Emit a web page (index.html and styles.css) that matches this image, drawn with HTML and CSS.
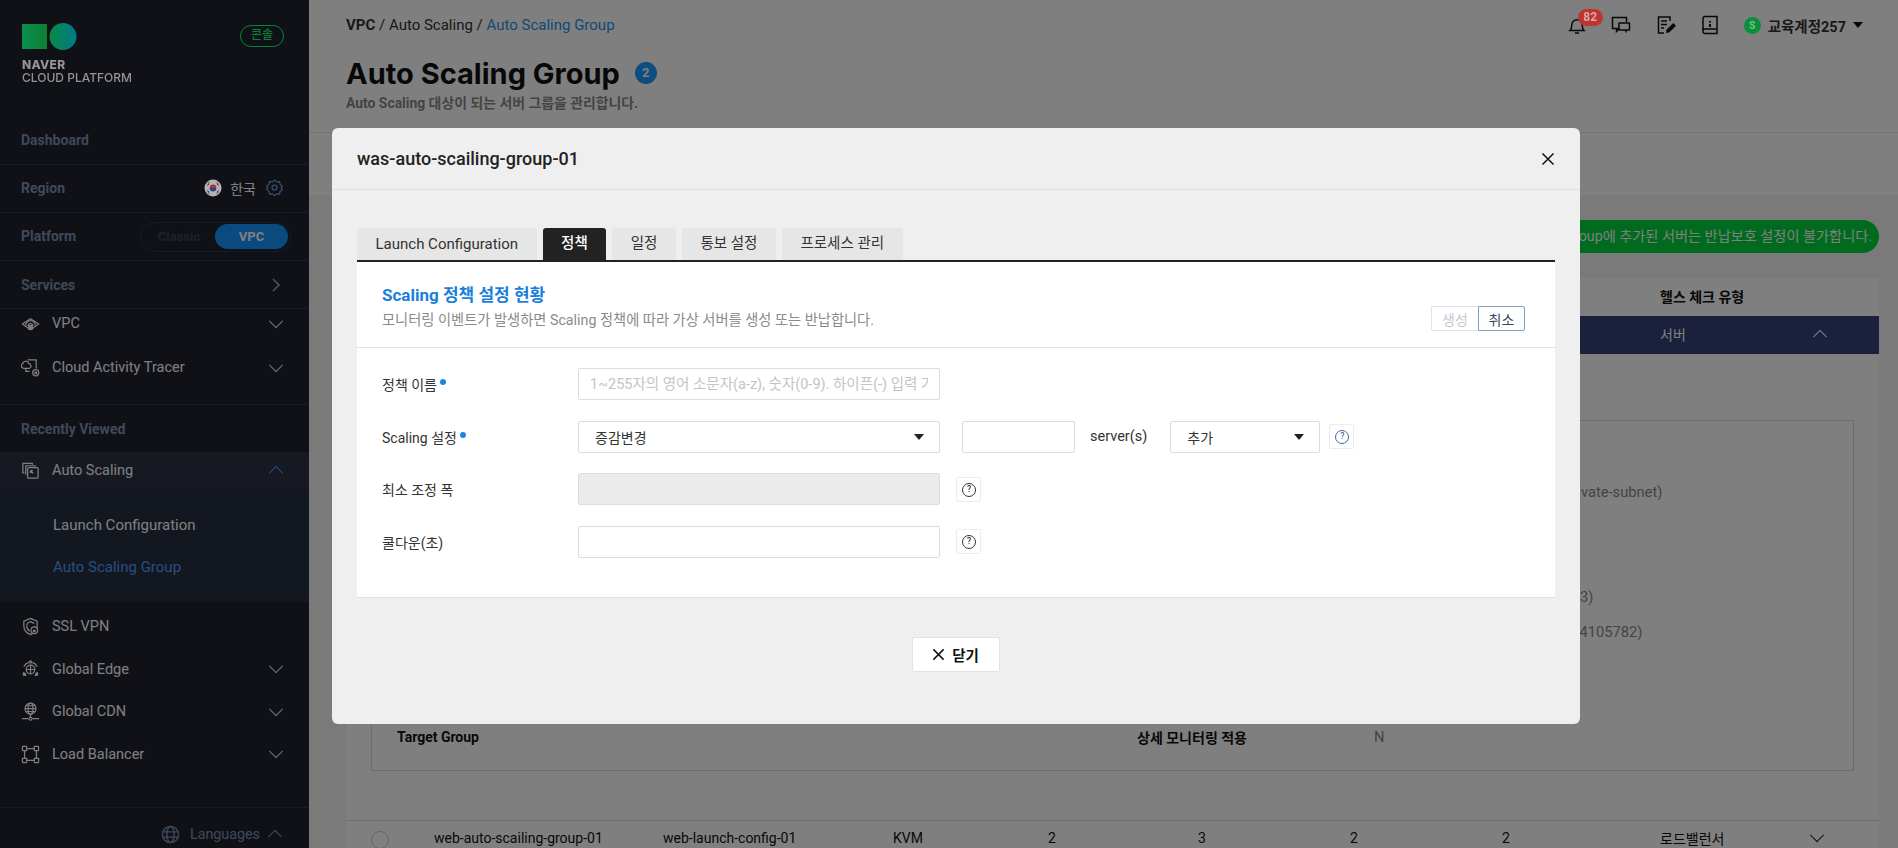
FILE: index.html
```html
<!DOCTYPE html>
<html lang="ko">
<head>
    <meta charset="UTF-8">
    <meta name="viewport" content="width=device-width, initial-scale=1.0">
    <title>Auto Scaling Group - NAVER CLOUD PLATFORM</title>
    <link rel="stylesheet" href="styles.css">
</head>
<body>
    <div class="app">
        <aside class="sidebar">
            <div class="brand">
                <div class="logo">
                    <svg class="logo-mark" width="56" height="28" viewBox="0 0 56 28">
                        <defs>
                            <linearGradient id="logoSquare" x1="0" x2="1" y1="0" y2="0">
                                <stop offset="0" stop-color="#0a8f52"/>
                                <stop offset="1" stop-color="#0d7f30"/>
                            </linearGradient>
                            <linearGradient id="logoCircle" x1="0" x2="1" y1="0" y2="0">
                                <stop offset="0" stop-color="#078a45"/>
                                <stop offset="1" stop-color="#007a88"/>
                            </linearGradient>
                        </defs>
                        <rect x="0" y="1" width="25" height="25" fill="url(#logoSquare)"/>
                        <circle cx="41" cy="13.5" r="13.5" fill="url(#logoCircle)"/>
                    </svg>
                    <div class="logo-name"><strong>NAVER</strong><span>CLOUD PLATFORM</span></div>
                </div>
                <span class="console-pill">콘솔</span>
            </div>

            <div class="side-row side-row-dash"><span class="side-label">Dashboard</span></div>
            <div class="side-row side-row-up">
                <span class="side-label">Region</span>
                <div class="region">
                    <svg class="flag" width="18" height="18" viewBox="0 0 18 18">
                        <circle cx="9" cy="9" r="8.5" fill="#b4b4b4"/>
                        <path d="M5.6 9a3.4 3.4 0 0 1 6.8 0z" fill="#b5303c"/>
                        <path d="M5.6 9a3.4 3.4 0 0 0 6.8 0z" fill="#23468f"/>
                        <path d="M3.5 5l2-1.6M3.2 6.6l2-1.6M14.5 5l-2-1.6M14.8 6.6l-2-1.6M3.5 13l2 1.6M3.2 11.4l2 1.6M14.5 13l-2 1.6M14.8 11.4l-2 1.6" stroke="#222" stroke-width=".8"/>
                    </svg>
                    <span class="region-name">한국</span>
                    <svg width="17" height="17" viewBox="0 0 24 24" fill="none" stroke="#6a9bd0" stroke-width="1.800">
                        <circle cx="12" cy="12" r="3.5"/>
                        <path d="M12 1.5l3 2.6 4-.4 1 3.9 3 2.4-1.6 2.5 1.6 2.5-3 2.4-1 3.9-4-.4-3 2.6-3-2.6-4 .4-1-3.9-3-2.4L2.6 12.500 1 10l3-2.400 1-3.900 4 .4z"/>
                    </svg>
                </div>
            </div>
            <div class="side-row side-row-up">
                <span class="side-label">Platform</span>
                <div class="platform-toggle">
                    <span class="platform-off">Classic</span>
                    <span class="platform-on">VPC</span>
                </div>
            </div>
            <div class="side-row">
                <span class="side-label">Services</span>
                <svg class="chev-svg" width="12" height="16" viewBox="0 0 12 16" fill="none" stroke="#8aa8cc" stroke-width="1.6"><path d="M3 2l6 6-6 6"/></svg>
            </div>

            <div class="side-list side-list-top">
                <a class="side-item">
                    <svg class="side-icon" viewBox="0 0 20 20" fill="none" stroke="currentColor" stroke-width="1.300">
                        <path d="M1.500 10.500L10 5l8.500 5.500L10 16.500z"/>
                        <path d="M5 12a5 5 0 0 1 10 0"/>
                        <path d="M7.500 12.500a2.500 2.500 0 0 1 5 0"/>
                        <rect x="8.200" y="12" width="3.600" height="4" fill="currentColor"/>
                    </svg>
                    <span>VPC</span>
                    <i class="chev-down"></i>
                </a>
                <a class="side-item">
                    <svg class="side-icon" viewBox="0 0 20 20" fill="none" stroke="currentColor" stroke-width="1.300">
                        <path d="M7 2h9v9"/>
                        <path d="M5 3.500a2.500 2.500 0 0 1 3 2.500 2.500 2.500 0 0 1 1 4.800H2.500A2.500 2.500 0 0 1 2 6a2.500 2.500 0 0 1 3-2.500z"/>
                        <path d="M5 11v3h4"/>
                        <circle cx="15.500" cy="15.500" r="3.200"/>
                        <circle cx="15.500" cy="15.500" r="1"/>
                    </svg>
                    <span>Cloud Activity Tracer</span>
                    <i class="chev-down"></i>
                </a>
            </div>

            <div class="side-row side-row-recent"><span class="side-label">Recently Viewed</span></div>
            <a class="side-item side-item-open">
                <svg class="side-icon" viewBox="0 0 20 20" fill="none" stroke="currentColor" stroke-width="1.300">
                    <path d="M3.500 12.500H2V2.500h10V4"/>
                    <path d="M5 14.500V5h10v1"/>
                    <rect x="7" y="7" width="11" height="11" rx="1"/>
                    <path d="M10 10l3 3M10 10h2.500M10 10v2.500"/>
                </svg>
                <span>Auto Scaling</span>
                <i class="chev-up"></i>
            </a>
            <div class="side-sub">
                <a class="side-sub-item">Launch Configuration</a>
                <a class="side-sub-item side-sub-active">Auto Scaling Group</a>
            </div>
            <div class="side-list side-list-bottom">
                <a class="side-item">
                    <svg class="side-icon" viewBox="0 0 20 20" fill="none" stroke="currentColor" stroke-width="1.300">
                        <path d="M10 1.500l7 3v5c0 4.500-3 7.500-7 9-4-1.500-7-4.500-7-9v-5z"/>
                        <path d="M10 5l4 1.800"/>
                        <path d="M6 8.500a4 4 0 0 1 7-2"/>
                        <path d="M6 9c0 2.500 1 4.500 3 6"/>
                        <circle cx="14" cy="14" r="3.500" fill="#20232f"/>
                        <rect x="12.500" y="13.500" width="3" height="2.500" fill="currentColor" stroke="none"/>
                    </svg>
                    <span>SSL VPN</span>
                </a>
                <a class="side-item">
                    <svg class="side-icon" viewBox="0 0 20 20" fill="none" stroke="currentColor" stroke-width="1.300">
                        <path d="M3 7a8.500 8.500 0 0 1 5-4.500M12 2.500A8.500 8.500 0 0 1 17 7M17.500 13a8.500 8.500 0 0 1-3 3.700M5.500 16.700a8.500 8.500 0 0 1-3-3.700"/>
                        <circle cx="10" cy="10" r="4.500"/>
                        <path d="M5.500 10h9M10 5.500v9"/>
                        <circle cx="10" cy="2" r="1.200"/>
                        <circle cx="3.500" cy="15" r="1.200"/>
                        <circle cx="16.500" cy="15" r="1.200"/>
                    </svg>
                    <span>Global Edge</span>
                    <i class="chev-down"></i>
                </a>
                <a class="side-item">
                    <svg class="side-icon" viewBox="0 0 20 20" fill="none" stroke="currentColor" stroke-width="1.200">
                        <circle cx="10" cy="7" r="5.800"/>
                        <ellipse cx="10" cy="7" rx="2.600" ry="5.800"/>
                        <path d="M4.200 7h11.600M5 4h10M5 10h10"/>
                        <path d="M10 13v3M1 17.500h7M12 17.500h7"/>
                        <circle cx="10" cy="17.500" r="1.600"/>
                    </svg>
                    <span>Global CDN</span>
                    <i class="chev-down"></i>
                </a>
                <a class="side-item">
                    <svg class="side-icon" viewBox="0 0 20 20" fill="none" stroke="currentColor" stroke-width="1.300">
                        <rect x="1.500" y="1.500" width="4.500" height="4.500" rx=".5"/>
                        <rect x="14" y="1.500" width="4.500" height="4.500" rx=".5"/>
                        <rect x="1.500" y="14" width="4.500" height="4.500" rx=".5"/>
                        <rect x="14" y="14" width="4.500" height="4.500" rx=".5"/>
                        <path d="M6 3.750h8M6 16.250h8M3.750 6v8M16.250 6v8"/>
                    </svg>
                    <span>Load Balancer</span>
                    <i class="chev-down"></i>
                </a>
            </div>

            <div class="languages">
                <svg width="19" height="19" viewBox="0 0 20 20" fill="none" stroke="#7d92b4" stroke-width="1.500">
                    <circle cx="10" cy="10" r="8.500"/>
                    <ellipse cx="10" cy="10" rx="3.800" ry="8.500"/>
                    <path d="M2 7.200h16M2 12.800h16"/>
                </svg>
                <span>Languages</span>
                <i class="chev-up chev-up-grey"></i>
            </div>
        </aside>

        <main class="main">
            <header class="topbar">
                <div class="crumbs"><b>VPC</b> / Auto Scaling / <a>Auto Scaling Group</a></div>
                <div class="top-icons">
                    <span class="top-icon">
                        <svg width="20" height="20" viewBox="0 0 20 20" fill="none" stroke="#111" stroke-width="1.500">
                            <path d="M3 15.500c1.500-1.500 1.800-3 1.800-5.500a5.200 5.200 0 0 1 10.400 0c0 2.500.3 4 1.800 5.500z"/>
                            <path d="M8 18h4"/>
                        </svg>
                        <span class="bell-badge">82</span>
                    </span>
                    <span class="top-icon">
                        <svg width="20" height="20" viewBox="0 0 20 20" fill="none" stroke="#111" stroke-width="1.500">
                            <path d="M7 13.500H3.500l-2 0V2.500h14V7"/>
                            <path d="M5.500 13.500v3l3-3"/>
                            <rect x="8" y="8" width="10.500" height="7" rx=".5"/>
                            <path d="M15 15v2.500"/>
                        </svg>
                    </span>
                    <span class="top-icon">
                        <svg width="20" height="20" viewBox="0 0 20 20" fill="none" stroke="#111" stroke-width="1.500">
                            <path d="M14 6V2H2.500v16H8"/>
                            <path d="M5 6h6M5 9.500h6M5 13h3"/>
                            <path d="M10.500 17.500l.7-3 6-6 2.300 2.300-6 6z" fill="#111" stroke-width="1"/>
                        </svg>
                    </span>
                    <span class="top-icon">
                        <svg width="20" height="20" viewBox="0 0 20 20" fill="none" stroke="#111" stroke-width="1.500">
                            <path d="M3 16V3.500a2 2 0 0 1 2-2h12v17H5a2 2 0 0 1-2-2.500A2 2 0 0 1 5 14h12"/>
                            <path d="M10 6v1.500M10 9v3" stroke-width="2"/>
                        </svg>
                    </span>
                    <div class="user">
                        <span class="user-dot">S</span>
                        <span class="user-name">교육계정257</span>
                        <i class="caret caret-dark"></i>
                    </div>
                </div>
            </header>
            <section class="page-head">
                <h1>Auto Scaling Group <span class="count">2</span></h1>
                <p>Auto Scaling 대상이 되는 서버 그룹을 관리합니다.</p>
            </section>
            <div class="tabs-blank"></div>

            <section class="content">
                <div class="notice-wrap">
                    <div class="notice">Auto Scaling Group에 추가된 서버는 반납보호 설정이 불가합니다.</div>
                </div>
                <div class="table-card">
                    <div class="grid-row head-row">
                        <span class="cell-check">헬스 체크 유형</span>
                    </div>
                    <div class="grid-row selected-row">
                        <span class="cell-check">서버</span>
                        <i class="chev-up chev-up-white cell-arrow"></i>
                    </div>
                    <div class="detail-wrap">
                        <div class="detail">
                            <div class="detail-line"></div>
                            <div class="detail-line"><span class="detail-value">subnet-1234567 (was-server-private-subnet)</span></div>
                            <div class="detail-line"></div>
                            <div class="detail-line"></div>
                            <div class="detail-line"><span class="detail-value">1234567 (default-init-script-0003)</span></div>
                            <div class="detail-line"><span class="detail-value">SVR.VSVR.STAND.C002.M008 (4105782)</span></div>
                            <div class="detail-line"></div>
                            <div class="detail-line"></div>
                            <div class="detail-line">
                                <b>Target Group</b>
                                <b class="detail-key">상세 모니터링 적용</b>
                                <span class="detail-value detail-n">N</span>
                            </div>
                        </div>
                    </div>
                    <div class="grid-row plain-row">
                        <span class="radio"></span>
                        <span>web-auto-scailing-group-01</span>
                        <span>web-launch-config-01</span>
                        <span>KVM</span>
                        <span>2</span>
                        <span>3</span>
                        <span>2</span>
                        <span>2</span>
                        <span>로드밸런서</span>
                        <i class="chev-down chev-down-dark"></i>
                    </div>
                </div>
            </section>
        </main>
    </div>

    <div class="dim"></div>

    <div class="modal">
        <div class="modal-head">
            <h2>was-auto-scailing-group-01</h2>
            <svg width="14" height="14" viewBox="0 0 14 14" stroke="#111" stroke-width="1.500"><path d="M1.500 1.500l11 11M12.500 1.500l-11 11"/></svg>
        </div>
        <div class="modal-body">
            <div class="tabs">
                <a class="tab tab-wide">Launch Configuration</a>
                <a class="tab tab-active">정책</a>
                <a class="tab">일정</a>
                <a class="tab">통보 설정</a>
                <a class="tab">프로세스 관리</a>
            </div>
            <div class="panel">
                <div class="panel-head">
                    <div>
                        <h3>Scaling 정책 설정 현황</h3>
                        <p>모니터링 이벤트가 발생하면 Scaling 정책에 따라 가상 서버를 생성 또는 반납합니다.</p>
                    </div>
                    <div class="btn-pair">
                        <button class="pair-off" type="button">생성</button>
                        <button class="pair-on" type="button">취소</button>
                    </div>
                </div>
                <form class="policy-form">
                    <div class="form-row">
                        <label class="req">정책 이름</label>
                        <input class="field" type="text" placeholder="1~255자의 영어 소문자(a-z), 숫자(0-9). 하이픈(-) 입력 가능">
                    </div>
                    <div class="form-row">
                        <label class="req">Scaling 설정</label>
                        <div class="field select-box"><span>증감변경</span><i class="caret"></i></div>
                        <input class="field field-num" type="text">
                        <span class="unit">server(s)</span>
                        <div class="field select-box select-small"><span>추가</span><i class="caret"></i></div>
                        <button class="help help-blue" type="button">?</button>
                    </div>
                    <div class="form-row">
                        <label>최소 조정 폭</label>
                        <div class="field field-off"></div>
                        <button class="help help-side" type="button">?</button>
                    </div>
                    <div class="form-row">
                        <label>쿨다운(초)</label>
                        <input class="field" type="text">
                        <button class="help help-side" type="button">?</button>
                    </div>
                </form>
            </div>
            <div class="modal-foot">
                <button class="close-btn" type="button">
                    <svg width="13" height="13" viewBox="0 0 14 14" stroke="#111" stroke-width="1.600"><path d="M1.500 1.500l11 11M12.500 1.500l-11 11"/></svg>
                    닫기
                </button>
            </div>
        </div>
    </div>
</body>
</html>
```

FILE: styles.css
```css
* {
    margin: 0;
    padding: 0;
    box-sizing: border-box;
}

html, body {
    height: 100%;
    overflow: hidden;
}

body {
    font-family: Roboto, 'Noto Sans CJK KR', sans-serif;
    font-size: 14px;
    color: #222;
    background: #fff;
}

.app {
    display: flex;
    height: 100vh;
}

/* sidebar */
.sidebar {
    width: 309px;
    flex-shrink: 0;
    background: #20232f;
    color: #fff;
    display: flex;
    flex-direction: column;
    overflow: hidden;
}

.brand {
    display: flex;
    justify-content: space-between;
    align-items: flex-start;
    height: 115px;
    padding: 23px 25px 0 22px;
}

/* these few are brighter than the dim layer allows, so they sit above it */
.logo-mark,
.logo-name,
.console-pill,
.flag {
    position: relative;
    z-index: 20;
}

.logo-mark {
    display: block;
}

.logo-name {
    margin-top: 7px;
    font-family: Inter, sans-serif;
    font-size: 12px;
    line-height: 13px;
    color: #949494;
}

.logo-name strong,
.logo-name span {
    display: block;
}

.logo-name strong {
    font-weight: 800;
    letter-spacing: .3px;
}

.logo-name span {
    font-weight: 500;
}

.console-pill {
    margin-top: 2px;
    width: 44px;
    height: 22px;
    line-height: 18px;
    text-align: center;
    border: 1.5px solid #07843a;
    border-radius: 11px;
    color: #07843a;
    font-size: 12px;
    font-weight: 500;
}

.side-row {
    display: flex;
    justify-content: space-between;
    align-items: center;
    height: 48px;
    padding: 0 21px;
    border-bottom: 1px solid #2a3a52;
}

.side-row-dash {
    height: 50px;
}

.side-row-recent {
    border-bottom: none;
    border-top: 1px solid #343848;
    height: 48px;
}

.side-label {
    font-size: 14px;
    font-weight: 700;
    color: #7d92b4;
    position: relative;
}

.side-row-up .side-label {
    top: -1px;
}

.region {
    display: flex;
    align-items: center;
    position: relative;
    top: -1px;
    margin-right: 5px;
}

.region-name {
    margin: 0 10px 0 8px;
    font-size: 14px;
}

.platform-toggle {
    display: flex;
    align-items: center;
    width: 151px;
    height: 30px;
    margin-right: -3px;
    padding: 2px;
    border: 1px solid #1d3a68;
    border-radius: 15px;
    font-size: 13px;
    font-weight: 700;
}

.platform-off {
    flex: 1;
    text-align: center;
    color: #3e4555;
}

.platform-on {
    width: 73px;
    height: 25px;
    line-height: 25px;
    text-align: center;
    background: #1694ff;
    border-radius: 13px;
}

.chev-svg {
    margin-right: 6px;
}

.side-list-top {
    height: 95px;
    overflow: hidden;
}

.side-list-top .side-item {
    height: 44px;
    position: relative;
    top: -8px;
}

.side-item {
    display: flex;
    align-items: center;
    height: 42.500px;
    padding: 1px 28px 0 21px;
    color: #fff;
}

.side-item span {
    flex: 1;
    font-size: 14.500px;
}

.side-icon {
    width: 19px;
    height: 19px;
    margin-right: 12px;
    flex-shrink: 0;
}

.side-item-open {
    height: 35px;
    background: #2c3342;
}

.side-sub {
    background: #262e40;
    padding: 17px 0 14px 53px;
}

.side-sub-item {
    display: flex;
    align-items: center;
    height: 42px;
    font-size: 15px;
}

.side-sub-active {
    color: #4aa0ff;
}

.side-list-bottom {
    margin-top: 3px;
}

.languages {
    margin-top: auto;
    height: 41px;
    display: flex;
    align-items: center;
    justify-content: flex-end;
    gap: 10px;
    padding: 12px 29px 0 0;
    border-top: 1px solid #343848;
    color: #7d92b4;
    font-size: 14.300px;
}

.chev-down,
.chev-up {
    display: block;
    width: 10px;
    height: 10px;
    border-right: 1.700px solid #e8e8e8;
    border-bottom: 1.700px solid #e8e8e8;
    flex-shrink: 0;
}

.chev-down {
    transform: rotate(45deg) translate(-2px, -2px);
}

.chev-up {
    transform: rotate(225deg) translate(-2px, -2px);
    border-color: #3a9cff;
}

.chev-up-grey {
    border-color: #7d92b4;
}

.chev-up-white {
    border-color: #fff;
}

.chev-down-dark {
    border-color: #222;
}

/* main page under the dialog */
.main {
    flex: 1;
    min-width: 0;
    display: flex;
    flex-direction: column;
    background: #fff;
}

.topbar {
    display: flex;
    justify-content: space-between;
    align-items: center;
    height: 50px;
    padding: 0 35px 0 37px;
}

.crumbs {
    font-size: 15px;
    color: #333;
}

.crumbs a {
    color: #1f94e8;
}

.top-icons {
    display: flex;
    align-items: center;
}

.top-icon {
    position: relative;
    display: flex;
    justify-content: center;
    width: 44.500px;
}

.bell-badge {
    position: absolute;
    top: -6px;
    left: 23px;
    z-index: 20;
    width: 25px;
    height: 17px;
    line-height: 17px;
    text-align: center;
    border-radius: 9px;
    background: #bd3530;
    color: #d8a8a5;
    font-size: 12px;
    font-weight: 700;
}

.user {
    display: flex;
    align-items: center;
    margin-left: 11px;
}

.user-dot {
    position: relative;
    z-index: 20;
    width: 17px;
    height: 17px;
    line-height: 17px;
    text-align: center;
    border-radius: 50%;
    background: #0a8f3a;
    color: #7dbb8f;
    font-size: 10px;
    font-weight: 700;
}

.user-name {
    margin: 0 7px 0 7px;
    font-size: 14.500px;
    font-weight: 700;
    color: #333;
}

.page-head {
    height: 83px;
    padding: 3px 37px 0;
    border-bottom: 1px solid #e6e6e6;
}

.page-head h1 {
    display: flex;
    align-items: center;
    gap: 15px;
    height: 40px;
    font-family: Inter, sans-serif;
    font-size: 29px;
    font-weight: 700;
    color: #111;
}

.count {
    width: 22px;
    height: 22px;
    line-height: 22px;
    text-align: center;
    border-radius: 50%;
    background: #1a9cff;
    color: #fff;
    font-family: Roboto, sans-serif;
    font-size: 13px;
}

.page-head p {
    margin-top: -1px;
    font-size: 13.900px;
    font-weight: 700;
    color: #888;
}

.tabs-blank {
    height: 62px;
}

.content {
    flex: 1;
    background: #f4f4f4;
    padding: 25px 19px 0 37px;
    overflow: hidden;
}

.notice-wrap {
    display: flex;
    justify-content: flex-end;
    margin-bottom: 25px;
}

.notice {
    height: 33px;
    line-height: 33px;
    padding: 0 7px 0 22px;
    border-radius: 17px;
    background: #00d63c;
    color: #fff;
    font-size: 14.200px;
}

.table-card {
    background: #fff;
    border-radius: 4px 4px 0 0;
}

.grid-row {
    display: grid;
    grid-template-columns: 63px 229px 230px 155px 150px 152px 152px 158px 152px 40px;
    align-items: center;
    padding-left: 25px;
}

.cell-check {
    grid-column: 9;
}

.cell-arrow {
    grid-column: 10;
    margin-left: 3px;
}

.head-row {
    height: 38px;
    padding-bottom: 2px;
    font-weight: 700;
    color: #111;
}

.selected-row {
    height: 38px;
    padding-bottom: 2px;
    background: #36427a;
    color: #fff;
}

.detail-wrap {
    padding: 66px 25px 49px;
    border-bottom: 1px solid #ddd;
}

.detail {
    height: 351px;
    padding: 18px 25px 0 25px;
    border: 1px solid #d8d8d8;
}

.detail-line {
    display: grid;
    grid-template-columns: 740px 237px 1fr;
    align-items: center;
    height: 35px;
    color: #111;
}

.detail-value {
    grid-column: 3;
    color: #888;
    font-size: 14.700px;
    white-space: nowrap;
}

.detail-key {
    grid-column: 2;
}

.plain-row {
    height: 34px;
    color: #111;
    background: #fff;
}

.radio {
    display: block;
    width: 18px;
    height: 18px;
    border: 1px solid #ccc;
    border-radius: 50%;
    margin-top: 3px;
}

/* dialog */
.dim {
    position: fixed;
    inset: 0;
    z-index: 10;
    background: rgba(0, 0, 0, .5);
}

.modal {
    position: fixed;
    top: 128px;
    left: 332px;
    z-index: 30;
    width: 1248px;
    height: 596px;
    background: #efefef;
    border-radius: 6px;
}

.modal-head {
    display: flex;
    justify-content: space-between;
    align-items: center;
    height: 62px;
    padding: 0 25px 0 25px;
    border-bottom: 1px solid #e0e0e0;
}

.modal-head h2 {
    font-size: 18px;
    font-weight: 500;
    color: #222;
}

.modal-body {
    padding: 38px 25px 0;
}

.tabs {
    display: flex;
    gap: 6px;
    height: 34px;
    border-bottom: 2px solid #222;
}

.tab {
    height: 32px;
    line-height: 32px;
    padding: 0 18.500px;
    background: #e6e6e6;
    border-radius: 3px 3px 0 0;
    font-size: 14.500px;
    color: #333;
}

.tab-wide {
    font-size: 15px;
}

.tab-active {
    background: #222;
    color: #fff;
    font-weight: 500;
}

.panel {
    height: 336px;
    background: #fff;
    border-bottom: 1px solid #e0e0e0;
}

.panel-head {
    display: flex;
    justify-content: space-between;
    align-items: flex-end;
    height: 86px;
    padding: 0 30px 16px 25px;
    border-bottom: 1px solid #e4e4e4;
}

.panel-head > div:first-child {
    padding-bottom: 1px;
}

.panel-head h3 {
    font-size: 17px;
    font-weight: 700;
    color: #1a7fdc;
    margin-bottom: 4px;
    line-height: 22px;
}

.panel-head p {
    font-size: 14.250px;
    line-height: 20px;
    color: #8a8a8a;
}

.btn-pair {
    display: flex;
}

.btn-pair button {
    width: 47px;
    height: 25px;
    font: inherit;
    font-size: 14px;
    background: #fff;
}

.pair-off {
    border: 1px solid #dde3ea;
    border-right: none;
    border-radius: 2px 0 0 2px;
    color: #c2c8d0;
}

.pair-on {
    border: 1px solid #7e9fc4;
    border-radius: 0 2px 2px 0;
    color: #3a4a64;
}

.policy-form {
    display: flex;
    flex-direction: column;
    gap: 20.500px;
    padding: 20px 25px 0;
}

.form-row {
    display: flex;
    align-items: center;
    height: 32px;
}

.form-row label {
    width: 196px;
    flex-shrink: 0;
    font-size: 14px;
    color: #333;
}

.req::after {
    content: "";
    display: inline-block;
    width: 6px;
    height: 6px;
    margin-left: 3px;
    border-radius: 50%;
    background: #1a85e8;
    vertical-align: 5px;
}

.field {
    width: 362px;
    height: 32px;
    padding: 0 11px;
    border: 1px solid #dcdcdc;
    border-radius: 2px;
    background: #fff;
    font: inherit;
    font-size: 14.500px;
    color: #333;
}

.field::placeholder {
    color: #c4c4c4;
}

.select-box {
    display: flex;
    align-items: center;
    justify-content: space-between;
    padding: 0 15px 0 16px;
    font-size: 14px;
}

.caret {
    display: block;
    width: 0;
    height: 0;
    border-left: 5px solid transparent;
    border-right: 5px solid transparent;
    border-top: 6px solid #222;
}

.caret-dark {
    border-top-color: #111;
}

.field-num {
    width: 113px;
    margin-left: 22px;
}

.unit {
    margin: 0 23px 0 15px;
    font-size: 14.500px;
    color: #333;
}

.select-small {
    width: 150px;
}

.field-off {
    background: #ebebeb;
}

.help {
    width: 25px;
    height: 25px;
    margin-left: 9px;
    background: #fff;
    border: 1px solid #ececec;
    border-radius: 2px;
    font: inherit;
    color: transparent;
    position: relative;
}

.help::after {
    content: "?";
    position: absolute;
    top: 5px;
    left: 5px;
    width: 12px;
    height: 12px;
    line-height: 10px;
    border: 1px solid #333;
    border-radius: 50%;
    color: #333;
    font-size: 8.500px;
    font-weight: 500;
    text-align: center;
}

.help-side {
    margin-left: 16px;
}

.help-blue::after {
    border-color: #3f6c9c;
    color: #3f6c9c;
}

.modal-foot {
    display: flex;
    justify-content: center;
    padding-top: 39px;
}

.close-btn {
    display: flex;
    align-items: center;
    justify-content: center;
    gap: 7px;
    width: 88px;
    height: 35px;
    margin-left: -1px;
    background: #fff;
    border: 1px solid #e2e2e2;
    border-radius: 2px;
    font: inherit;
    font-weight: 700;
    font-size: 14.500px;
    color: #111;
}
```
